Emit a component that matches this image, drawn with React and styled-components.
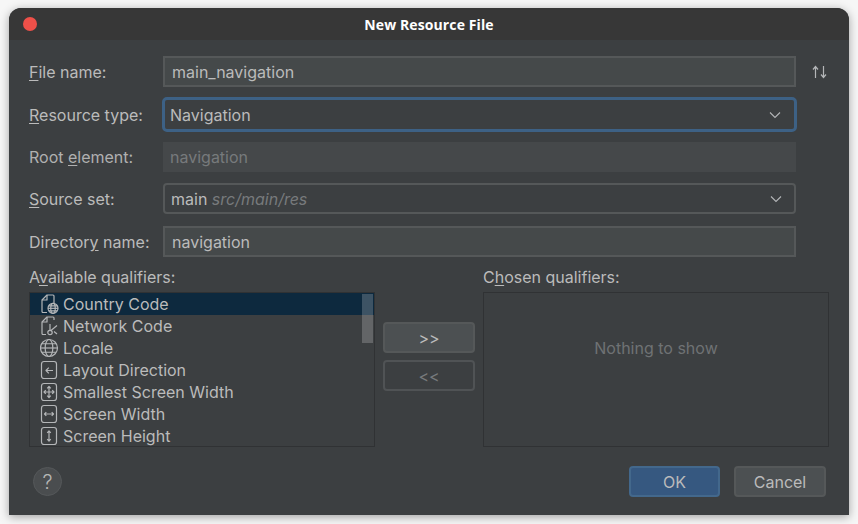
import React from "react";
import styled, { createGlobalStyle } from "styled-components";

const Global = createGlobalStyle`
  html, body { margin: 0; padding: 0; background: #fafafa; }
  * { box-sizing: border-box; }
`;
const Page = styled.div`
  width: 858px; height: 524px; padding: 8px 9px 9px; overflow: hidden;
  background: #f6f6f6; font-family: Inter, "Liberation Sans", sans-serif;
  font-size: 16px; color: #bbbbbb;
`;
const Window = styled.div`
  width: 840px; height: 507px; display: flex; flex-direction: column;
  background: #3c3f41; border-radius: 12px 12px 0 0;
  box-shadow: 0 2px 10px rgba(0,0,0,.35);
  overflow: hidden;
`;
const TitleBar = styled.div`
  position: relative; height: 32px; flex: none; display: flex; align-items: center; justify-content: center;
  background: #373737; color: #fff; letter-spacing: .1px;
  font: 700 14px "Open Sans", "Noto Sans", sans-serif;
`;
const Close = styled.span`
  position: absolute; left: 14px; top: 9px; width: 14px; height: 14px; border-radius: 50%; background: #ee5049;
`;
const Content = styled.div`
  flex: 1; display: flex; flex-direction: column; padding: 16px 20px 18px;
`;
const Row = styled.div`
  display: grid; grid-template-columns: 134px 633px 33px; align-items: center;
  height: ${p => p.$h}px; margin-bottom: ${p => p.$mb}px;
`;
const Label = styled.label`
  white-space: nowrap; padding-top: ${p => p.$dim ? 0 : 1}px;
  color: ${p => p.$dim ? "#b0b0b0" : "#bbbbbb"};
`;
const Mn = styled.span` text-decoration: underline; text-underline-offset: 2px; `;
const Input = styled.div`
  height: 31px; display: flex; align-items: center; padding: 1px 7px 0; line-height: 1;
  background: #45494a; border: 2px solid #555859; color: #bbbbbb;
`;
const DisabledInput = styled(Input)`
  height: 30px; padding: 0 7px; background: #45484a; border: none; color: #777a7c;
`;
const Combo = styled.div`
  display: flex; align-items: center; justify-content: space-between;
  height: 31px; padding: 1px 12px 0 6px; border: 2px solid #555859; border-radius: 4px; background: #3c3f41;
`;
const FocusCombo = styled(Combo)`
  height: 35px; margin: 0 -1px; padding: 1px 13px 0 5px; border: 3px solid #3d6185; border-radius: 5px;
`;
const ComboValue = styled.span` color: #bbbbbb; `;
const Hint = styled.em` color: #777a7c; font-style: italic; `;
const SortBtn = styled.span` display: flex; justify-content: flex-end; padding-right: 1px; padding-top: 1px; `;
const Qualifiers = styled.div`
  display: grid; grid-template-columns: 346px 108px 346px; grid-template-rows: 18px 155px; row-gap: 8px; margin-top: 9px;
`;
const ListBox = styled.div`
  position: relative; height: 155px; border: 1px solid #303234; overflow: hidden;
`;
const Item = styled.div`
  display: flex; align-items: center; height: 22px; padding-left: 10px; gap: 4px;
  background: ${p => p.$sel ? "#0d293e" : "transparent"}; color: #bbbbbb;
  & svg { flex: none; }
`;
const Thumb = styled.span`
  position: absolute; right: 1px; top: 1px; width: 11px; height: 49px; background: rgba(255,255,255,.2);
`;
const Mid = styled.div`
  display: flex; flex-direction: column; align-items: center; gap: 7px; padding-top: 30px;
`;
const SmallBtn = styled.button`
  width: 92px; height: 31px; border-radius: 4px; font: inherit; font-variant-ligatures: none; font-feature-settings: "calt" 0;
  background: ${p => p.disabled ? "transparent" : "#4c5052"};
  border: 2px solid ${p => p.disabled ? "#505355" : "#555859"};
  color: ${p => p.disabled ? "#777a7c" : "#bbbbbb"};
`;
const Empty = styled.div`
  height: 155px; border: 1px solid #303234; display: flex; align-items: center; justify-content: center; color: #6f7274; padding-bottom: 44px;
`;
const Footer = styled.div`
  margin-top: auto; display: flex; align-items: center; padding: 0 3px 0 4px; gap: 14px;
`;
const Help = styled.span`
  width: 29px; height: 29px; border-radius: 50%; background: #4a4d4f; border: 1px solid #55585a; color: #b5b5b5;
  display: flex; align-items: center; justify-content: center; font-size: 20px; font-weight: 300; margin-right: auto;
`;
const DlgBtn = styled.button`
  width: ${p => p.$primary ? 91 : 92}px; height: 31px; border-radius: 4px; font: inherit; color: #bbbbbb;
  background: ${p => p.$primary ? "#365880" : "#4c5052"};
  border: 2px solid ${p => p.$primary ? "#43688c" : "#555859"};
`;

const S = "#b4b6b8";
const Chevron = () => (
  <svg width="12" height="8" viewBox="0 0 12 8" fill="none" stroke={S} strokeWidth="1.1"><path d="M1 1.5 6 6.5 11 1.5" /></svg>
);
const Sort = () => (
  <svg width="17" height="14" viewBox="0 0 17 14" fill="none" stroke={S} strokeWidth="1.2">
    <path d="M4.5 13V2M2 4.5 4.5 1.5 7 4.5" /><path d="M12.5 1v11M10 9.5 12.5 12.5 15 9.5" />
  </svg>
);
const I = ({ children }) => (
  <svg width="19" height="20" viewBox="0 0 19 20" fill="none" stroke={S} strokeWidth="1.2" strokeLinejoin="round">{children}</svg>
);
const Globe = ({ cx, cy, r }) => (
  <g>
    <circle cx={cx} cy={cy} r={r} />
    <ellipse cx={cx} cy={cy} rx={r * 0.45} ry={r} />
    <path d={`M${cx - r} ${cy}H${cx + r}`} />
    <path d={`M${cx - r * 0.85} ${cy - r * 0.5}H${cx + r * 0.85}M${cx - r * 0.85} ${cy + r * 0.5}H${cx + r * 0.85}`} />
  </g>
);
const Box = () => <rect x="1.5" y="1.5" width="15" height="17" rx="2.5" />;
const icons = {
  country: <I><path d="M7 18.5H3a1 1 0 0 1-1-1V6l5-5h6a1 1 0 0 1 1 1v7" /><path d="M2 6h5V1" /><Globe cx={13} cy={14.3} r={5} /></I>,
  network: <I><path d="M6 18.5H3a1 1 0 0 1-1-1V6l5-5h6a1 1 0 0 1 1 1v2" /><path d="M2 6h5V1" /><path d="M10 8v7M11 14.5l6-5" /><circle cx="10" cy="16.5" r="2.2" /><path d="M14 15.5l3 2.5" /></I>,
  locale: <I><Globe cx={9} cy={10} r={8.5} /></I>,
  layout: <I><Box /><path d="M13 10.5H6M8.8 7.7 6 10.5l2.8 2.8" /></I>,
  smallest: <I><Box /><path d="M9 4.5v11M4 10h10M7.2 6.3 9 4.5l1.8 1.8M7.2 13.7 9 15.5l1.8-1.8M5.8 8.2 4 10l1.8 1.8M12.2 8.2 14 10l-1.8 1.8" /></I>,
  width: <I><Box /><path d="M4.5 10h9M6.3 8.2 4.5 10l1.8 1.8M11.7 8.2l1.8 1.8-1.8 1.8" /></I>,
  height: <I><Box /><path d="M9 5v10M7.2 6.8 9 5l1.8 1.8M7.2 13.2 9 15l1.8-1.8" /></I>,
};
const items = [
  ["country", "Country Code"], ["network", "Network Code"], ["locale", "Locale"], ["layout", "Layout Direction"],
  ["smallest", "Smallest Screen Width"], ["width", "Screen Width"], ["height", "Screen Height"],
];

export default function App() {
  return (
    <Page>
      <Global />
      <Window>
        <TitleBar><Close />New Resource File</TitleBar>
        <Content>
          <Row $h={31} $mb={10}>
            <Label><Mn>F</Mn>ile name:</Label>
            <Input>main_navigation</Input>
            <SortBtn><Sort /></SortBtn>
          </Row>
          <Row $h={35} $mb={10}>
            <Label><Mn>R</Mn>esource type:</Label>
            <FocusCombo><ComboValue>Navigation</ComboValue><Chevron /></FocusCombo>
          </Row>
          <Row $h={30} $mb={11}>
            <Label $dim>Root <Mn>e</Mn>lement:</Label>
            <DisabledInput>navigation</DisabledInput>
          </Row>
          <Row $h={31} $mb={12}>
            <Label><Mn>S</Mn>ource set:</Label>
            <Combo><ComboValue>main <Hint>src/main/res</Hint></ComboValue><Chevron /></Combo>
          </Row>
          <Row $h={31} $mb={0}>
            <Label>Director<Mn>y</Mn> name:</Label>
            <Input>navigation</Input>
          </Row>
          <Qualifiers>
            <Label>A<Mn>v</Mn>ailable qualifiers:</Label>
            <span />
            <Label>C<Mn>h</Mn>osen qualifiers:</Label>
            <ListBox>
              {items.map(([k, t], i) => (
                <Item key={k} $sel={i === 0}>{icons[k]}<span>{t}</span></Item>
              ))}
              <Thumb />
            </ListBox>
            <Mid>
              <SmallBtn>&gt;&gt;</SmallBtn>
              <SmallBtn disabled>&lt;&lt;</SmallBtn>
            </Mid>
            <Empty>Nothing to show</Empty>
          </Qualifiers>
          <Footer>
            <Help>?</Help>
            <DlgBtn $primary>OK</DlgBtn>
            <DlgBtn>Cancel</DlgBtn>
          </Footer>
        </Content>
      </Window>
    </Page>
  );
}
